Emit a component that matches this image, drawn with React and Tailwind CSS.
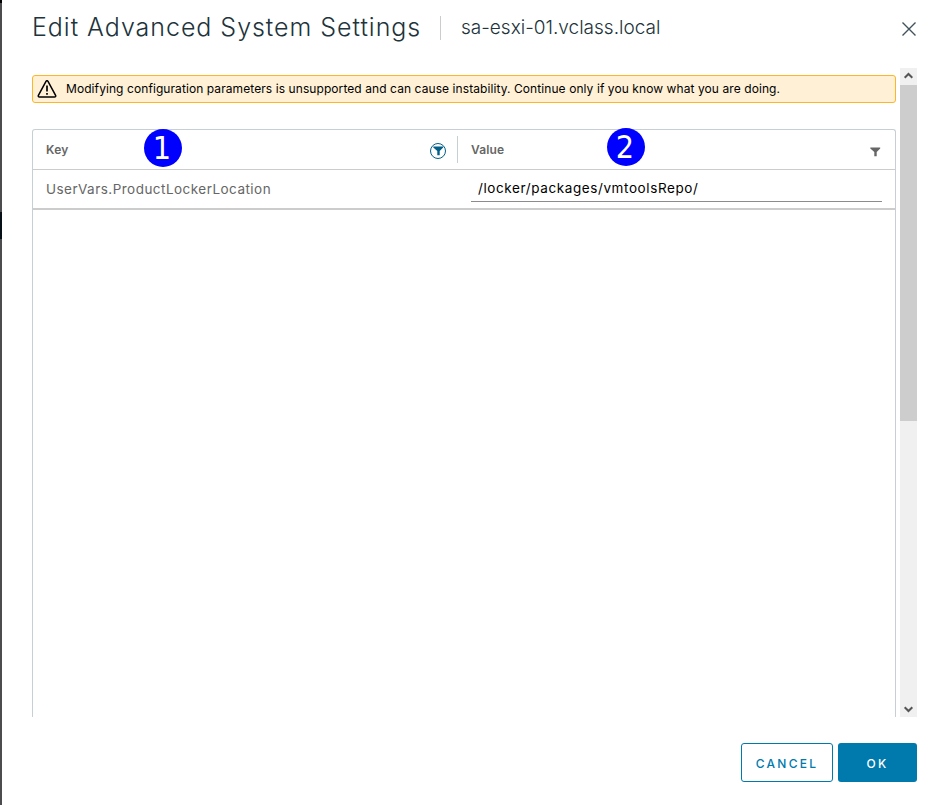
function Filter({ className }) {
  return (
    <svg className={className} viewBox="0 0 11 10" fill="currentColor">
      <path d="M0.3 0.5H10.2V1.6L6.7 5V9.3H4.3V5L0.3 1.6Z" />
    </svg>
  );
}

function Badge({ children, className }) {
  return (
    <span className={`absolute flex h-[38px] w-[38px] items-center justify-center rounded-full bg-[#0000ff] pr-[2px] font-['DejaVu_Sans_Condensed','DejaVu_Sans',sans-serif] text-[32px] font-normal leading-none text-white ${className}`}>
      {children}
    </span>
  );
}

function Header() {
  return (
    <header className="flex h-[68px] items-start pl-[30px] pr-[17px] text-[#21333b]">
      <h1 className="mt-[11px] w-[408px] whitespace-nowrap text-[25px] font-light leading-8 tracking-[0.97px]">
        <span>Edit Advanced System Settings</span>
      </h1>
      <span className="mt-4 h-6 w-px bg-[#cccccc]" />
      <h2 className="ml-5 mt-[12px] whitespace-nowrap text-[19px] font-light leading-8">
        <span>sa-esxi-01.vclass.local</span>
      </h2>
      <button className="ml-auto mt-[22px] h-[14px] w-[14px] text-[#40535c]" aria-label="Close">
        <svg viewBox="0 0 14 14" className="block h-full w-full" fill="none" stroke="currentColor" strokeWidth="1.4">
          <path d="M.5.5 13.5 13.5M13.5.5.5 13.5" />
        </svg>
      </button>
    </header>
  );
}

function Warning() {
  return (
    <div className="flex h-7 items-center whitespace-nowrap rounded-[3px] border border-[#fdb62b] bg-[#fff0d6] pl-1 text-[12px] text-black">
      <svg viewBox="0 0 20 18" className="h-[18px] w-5 shrink-0" fill="none" stroke="#000" strokeLinejoin="round">
        <path strokeWidth="1.5" d="M9 1.4Q10 0 11 1.4L18.6 15.3Q19.1 17 17.4 17H2.5Q.9 17 1.4 15.3Z" />
        <path strokeWidth="1.7" d="M10 5.5V11.5M10 13V14.8" />
      </svg>
      <span className="ml-[9px] tracking-[0.08px]">
        Modifying configuration parameters is unsupported and can cause instability. Continue only if you know what you are doing.
      </span>
    </div>
  );
}

function SettingsTable() {
  return (
    <div className="mt-[26px] flex min-h-0 flex-1 flex-col rounded-t-[3px] border border-b-0 border-[#c6d0d4]">
      <div className="flex h-10 items-center border-b border-[#cccccc] text-[12px] font-semibold text-[#666666]">
        <div className="relative flex h-full w-[424px] items-center justify-between pl-[13px] pr-[11px]">
          <span className="tracking-[0.2px]">Key</span>
          <Badge className="left-[111px] top-[-1px]">1</Badge>
          <span className="mt-[3px] flex h-4 w-4 items-center justify-center rounded-full border border-[#00608a] text-[#00608a]">
            <Filter className="h-[10px] w-[11px] shrink-0" />
          </span>
        </div>
        <span className="h-[27px] w-px bg-[#c6d0d4]" />
        <div className="relative flex h-full flex-1 items-center justify-between pl-[13px] pr-[14px]">
          <span className="tracking-[0.15px]">Value</span>
          <Badge className="left-[149px] top-[-2px]">2</Badge>
          <Filter className="mt-1 h-[10px] w-[11px]" />
        </div>
      </div>
      <div className="flex h-10 border-b-2 border-[#cccccc]">
        <div className="flex w-[438px] items-center pl-[13px] text-[13.5px] text-[#666666]">
          <span className="mt-px tracking-[0.47px]">UserVars.ProductLockerLocation</span>
        </div>
        <div className="mr-[13px] flex h-8 flex-1 items-center border-b border-[#8c8c8c] pl-[7px] pt-[6px] text-[13.5px] text-black">
          <span className="tracking-[0.6px]">/locker/packages/vmtoolsRepo/</span>
        </div>
      </div>
    </div>
  );
}

function Scrollbar() {
  return (
    <div className="ml-1 flex h-[649px] w-[17px] flex-col bg-[#f0f0f0] text-[#555555]">
      <svg viewBox="0 0 17 17" className="h-[17px] w-[17px]" fill="none" stroke="currentColor" strokeWidth="2">
        <path d="M4.7 9.8 8.5 6 12.3 9.8" />
      </svg>
      <span className="h-[336px] bg-[#cdcdcd]" />
      <svg viewBox="0 0 17 17" className="mt-auto h-[17px] w-[17px]" fill="none" stroke="currentColor" strokeWidth="2">
        <path d="M4.7 7.2 8.5 11 12.3 7.2" />
      </svg>
    </div>
  );
}

export default function App() {
  return (
    <div className="flex h-[805px] w-[933px] overflow-hidden bg-white font-['Inter',sans-serif]">
      <div className="flex w-[2px] shrink-0 flex-col bg-[#4c4c4e]">
        <span className="h-[3px] bg-black" />
        <span className="mt-[209px] h-[27px] bg-[#071016]" />
      </div>
      <div className="flex w-[931px] flex-col">
        <Header />
        <main className="flex h-[649px] pl-[30px]">
          <div className="flex h-full w-[864px] flex-col pt-[7px]">
            <Warning />
            <SettingsTable />
          </div>
          <Scrollbar />
        </main>
        <footer className="mr-4 mt-[26px] flex justify-end gap-[5px] text-[12px] font-medium">
          <button className="h-[39px] w-[92px] rounded-[3px] border border-[#0079ad] pt-[2px] tracking-[2.3px] text-[#0079ad]">CANCEL</button>
          <button className="h-[39px] w-[79px] rounded-[3px] bg-[#0079ad] pt-[2px] tracking-[2.3px] text-white">OK</button>
        </footer>
      </div>
    </div>
  );
}
